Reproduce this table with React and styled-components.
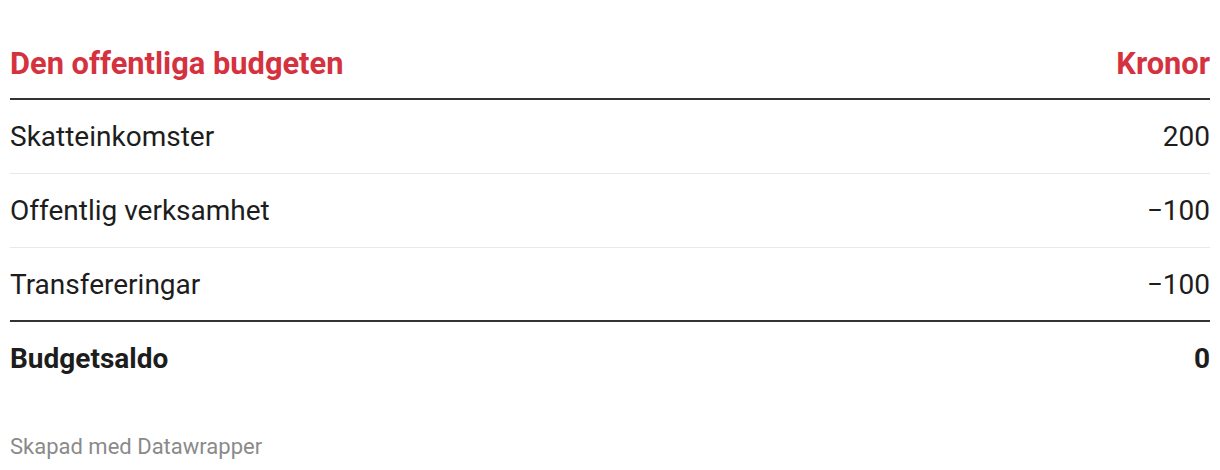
import React from "react";
import styled, { createGlobalStyle } from "styled-components";

const Global = createGlobalStyle`
  html, body { margin: 0; padding: 0; background: #fff; }
  body { font-family: Roboto, "Liberation Sans", sans-serif; }
`;

const Wrap = styled.div`
  padding: 40px 10px 0 10px;
  width: 1200px;
`;

const Table = styled.table`
  width: 100%;
  border-collapse: collapse;
  font-size: 28px;
  color: #1d1d1d;
`;

const Th = styled.th`
  color: #d5323f;
  font-weight: 700;
  font-size: 30.8px;
  text-align: ${(p) => (p.$right ? "right" : "left")};
  padding: 7px 0 17px 0;
  border-bottom: 2px solid #333;
  line-height: 34px;
`;

const Td = styled.td`
  text-align: ${(p) => (p.$right ? "right" : "left")};
  font-weight: ${(p) => (p.$bold ? 700 : 400)};
  height: ${(p) => p.$h}px;
  padding: 0;
  border-bottom: ${(p) => (p.$line === "dark" ? "2px solid #333" : p.$line === "light" ? "1px solid #e8e8e8" : "none")};
  vertical-align: middle;
`;

const Footer = styled.div`
  margin-top: 39px;
  font-size: 22px;
  color: #8a8a8a;
`;

const rows = [
  { label: "Skatteinkomster", value: "200", line: "light", h: 73 },
  { label: "Offentlig verksamhet", value: "−100", line: "light", h: 73 },
  { label: "Transfereringar", value: "−100", line: "dark", h: 72 },
];

export default function App() {
  return (
    <>
      <Global />
      <Wrap>
        <Table>
          <thead>
            <tr>
              <Th>Den offentliga budgeten</Th>
              <Th $right>Kronor</Th>
            </tr>
          </thead>
          <tbody>
            {rows.map((r) => (
              <tr key={r.label}>
                <Td $h={r.h} $line={r.line}>{r.label}</Td>
                <Td $h={r.h} $line={r.line} $right>{r.value}</Td>
              </tr>
            ))}
            <tr>
              <Td $h={73} $bold>Budgetsaldo</Td>
              <Td $h={73} $bold $right>0</Td>
            </tr>
          </tbody>
        </Table>
        <Footer>Skapad med Datawrapper</Footer>
      </Wrap>
    </>
  );
}
